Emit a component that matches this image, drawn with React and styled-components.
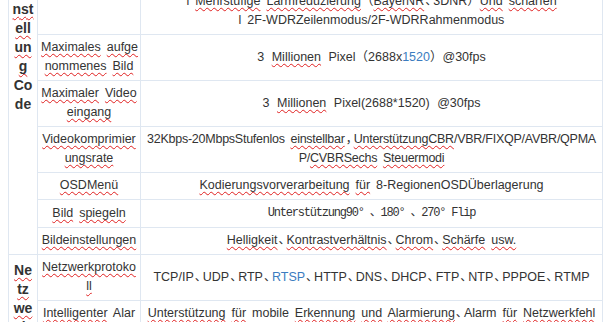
import React from "react";
import styled, { createGlobalStyle } from "styled-components";

const GlobalStyle = createGlobalStyle`
  html, body {
    margin: 0;
    overflow: hidden;
    background: #fff;
  }
  body {
    padding: 0 8px;
    font-family: "Liberation Sans", "Noto Sans CJK SC", sans-serif;
    font-size: 12.5px;
    color: #333;
  }
`;

const Table = styled.table`
  width: 595px;
  margin-top: -12px;
  border-collapse: collapse;
  table-layout: fixed;
  line-height: 19px;
  word-spacing: 2.5px;
`;

const Cell = styled.td`
  border: 1px solid #dfe7f1;
  padding: 3px 3px 4px;
  text-align: center;
  vertical-align: middle;
  white-space: nowrap;
  overflow: hidden;
`;

const GroupCell = styled(Cell)`
  vertical-align: top;
  padding-top: ${(p) => p.$top}px;
  font-size: 14px;
  font-weight: bold;
  word-spacing: 0;
`;

const Line = styled.span`
  display: block;
  letter-spacing: ${(p) => (p.$tight ? "-0.25px" : "normal")};
`;

const Spell = styled.span`
  text-decoration-line: underline;
  text-decoration-style: wavy;
  text-decoration-color: #e02020;
  text-decoration-thickness: 1px;
  text-underline-offset: 2px;
  text-decoration-skip-ink: none;
`;

const Link = styled.span`
  color: #3b7cc0;
`;

const Wide = styled.span`
  word-spacing: 4px;
`;

const Sep = styled.span`
  font-size: 12px;
  letter-spacing: -4px;
  padding-left: 1px;
`;

const Mono = styled.span`
  font-family: "Liberation Mono", "Noto Sans CJK SC", monospace;
  font-size: 12px;
  letter-spacing: -1.2px;
  word-spacing: 0;
`;

const S = Spell;
const C = () => <Sep>、</Sep>;

const rows = [
  {
    name: [],
    value: [
      <>l <S>Mehrstufige</S> <S>Lärmreduzierung</S>（<S>BayerNR</S><C />3DNR）<S>Und</S> <S>schärfen</S></>,
      <>l 2F-WDRZeilenmodus/2F-WDRRahmenmodus</>,
    ],
  },
  {
    name: [<><S>Maximales</S> <S>aufge</S></>, <><S>nommenes</S> <S>Bild</S></>],
    value: [<Wide>3 <S>Millionen</S> Pixel（2688x<Link>1520</Link>）@30fps</Wide>],
  },
  {
    name: [<><S>Maximaler</S> <S>Video</S></>, <S>eingang</S>],
    value: [<Wide>3 <S>Millionen</S> Pixel(2688*1520) @30fps</Wide>],
  },
  {
    name: [<S>Videokomprimier</S>, <S>ungsrate</S>],
    tight: true,
    value: [
      <>32Kbps-20MbpsStufenlos <S>einstellbar</S><Sep>，</Sep><S>UnterstützungCBR</S>/VBR/FIXQP/AVBR/QPMA</>,
      <>P/<S>CVBRSechs</S> <S>Steuermodi</S></>,
    ],
  },
  {
    name: [<S>OSDMenü</S>],
    value: [<><S>Kodierungsvorverarbeitung</S> <S>für</S> 8-RegionenOSDÜberlagerung</>],
  },
  {
    name: [<><S>Bild</S> <S>spiegeln</S></>],
    value: [<Mono>Unterstützung90° 、180° 、270° Flip</Mono>],
  },
  {
    name: [<S>Bildeinstellungen</S>],
    value: [
      <><S>Helligkeit</S><C /><S>Kontrastverhältnis</S><C /><S>Chrom</S><C /><S>Schärfe</S> <S>usw.</S></>,
    ],
  },
  {
    name: [<S>Netzwerkprotoko</S>, <S>ll</S>],
    value: [
      <>
        TCP/IP<C />UDP<C />RTP<C /><Link>RTSP</Link><C />HTTP<C />DNS<C />DHCP<C />FTP<C />NTP<C />PPPOE<C />RTMP
      </>,
    ],
  },
  {
    name: [<><S>Intelligenter</S> Alar</>, <>m</>],
    value: [
      <><S>Unterstützung</S> <S>für</S> mobile <S>Erkennung</S> <S>und</S> <S>Alarmierung</S><C />Alarm <S>für</S> <S>Netzwerkfehl</S></>,
      <>er</>,
    ],
  },
];

const groups = {
  0: { span: 7, top: 11, lines: ["nst", "ell", "un", "g", "Co", "de"], marked: 4 },
  7: { span: 2, top: 6, lines: ["Ne", "tz", "we", "rk"], marked: 4 },
};

function Lines({ items, tight }) {
  return items.map((item, i) => (
    <Line key={i} $tight={tight}>
      {item}
    </Line>
  ));
}

export default function App() {
  return (
    <>
      <GlobalStyle />
      <Table>
        <colgroup>
          <col style={{ width: 29 }} />
          <col style={{ width: 103 }} />
          <col />
        </colgroup>
        <tbody>
          {rows.map((row, i) => {
            const group = groups[i];
            return (
              <tr key={i}>
                {group && (
                  <GroupCell rowSpan={group.span} $top={group.top}>
                    {group.lines.map((l, j) => (
                      <Line key={j}>{j < group.marked ? <S>{l}</S> : l}</Line>
                    ))}
                  </GroupCell>
                )}
                <Cell>
                  <Lines items={row.name} />
                </Cell>
                <Cell>
                  <Lines items={row.value} tight={row.tight} />
                </Cell>
              </tr>
            );
          })}
        </tbody>
      </Table>
    </>
  );
}
